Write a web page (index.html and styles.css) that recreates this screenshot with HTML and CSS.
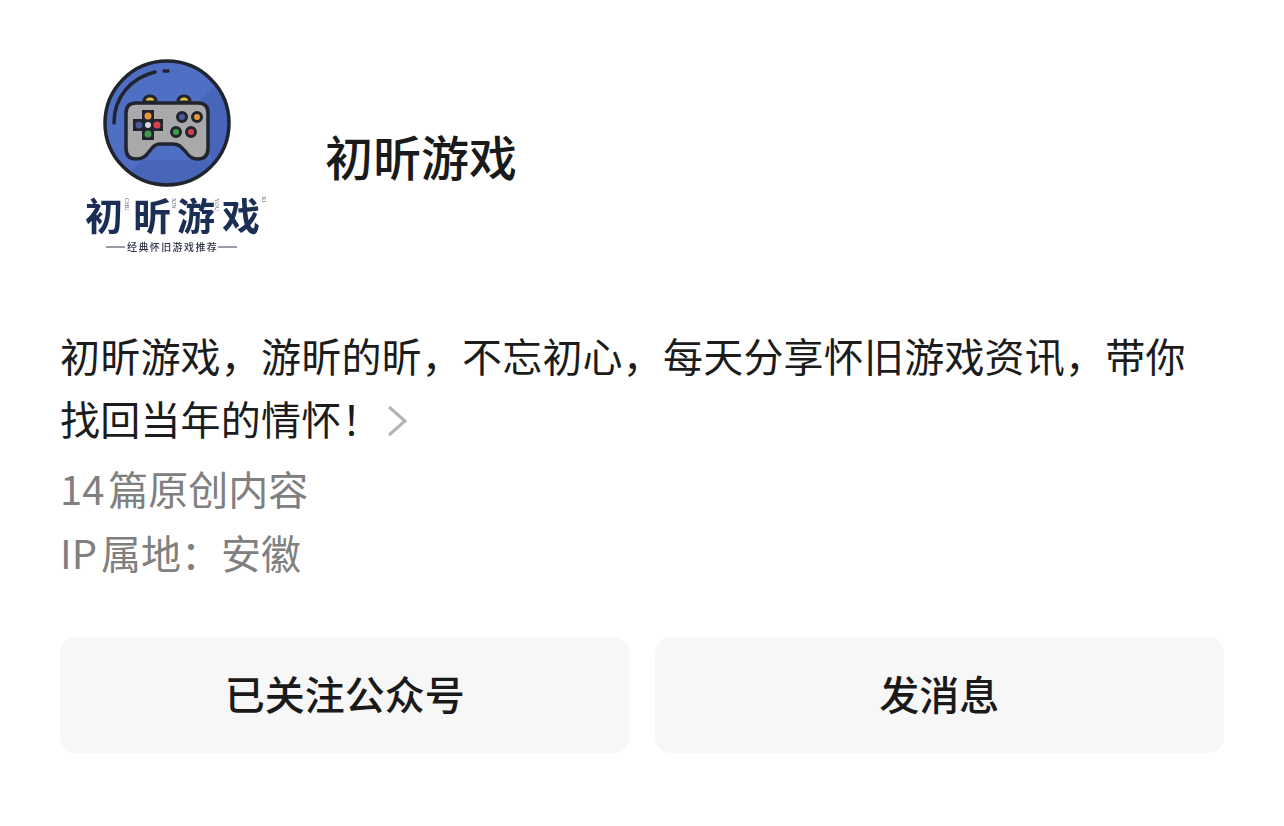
FILE: index.html
```html
<!DOCTYPE html>
<html lang="zh-CN">
<head>
<meta charset="utf-8">
<title>初昕游戏</title>
<link rel="stylesheet" href="styles.css">
</head>
<body>
<main class="card">
  <header class="head">
    <svg class="logo" viewBox="80 56 190 204" width="190" height="204" role="img" aria-label="初昕游戏">
      <defs><clipPath id="disc"><circle cx="167" cy="123" r="61"/></clipPath></defs>
      <circle cx="167" cy="123" r="62" fill="#4f6fc4"/>
      <path clip-path="url(#disc)" d="M230 70 L196 104 L212 160 L140 160 L120 190 L240 190 Z" fill="#4766b9"/>
      <circle cx="167" cy="123" r="62" fill="none" stroke="#20242e" stroke-width="3.500"/>
      <path d="M114 123 C114 98 130 78 155 72" fill="none" stroke="#20242e" stroke-width="3.500" stroke-linecap="round"/>
      <path d="M164 71 H168" fill="none" stroke="#20242e" stroke-width="3.500" stroke-linecap="round"/>
      <path d="M144 102 Q144 96 150 96 Q156 96 156 102 Z" fill="#e5c53c" stroke="#20242e" stroke-width="3"/>
      <path d="M178 102 Q178 96 184 96 Q190 96 190 102 Z" fill="#e5c53c" stroke="#20242e" stroke-width="3"/>
      <path d="M136 103 L198 103 Q208 103 208 113 L208 148 Q208 159 198 159 Q190 159 186 152 L180 146 Q177 144 172 144 L160 144 Q156 144 153 147 L148 153 Q144 159 136 159 Q126 159 126 148 L126 113 Q126 103 136 103 Z" fill="#a9a9a9" stroke="#20242e" stroke-width="3.500"/>
      <path d="M142 110 H154 V119 H163 V131 H154 V140 H142 V131 H133 V119 H142 Z" fill="#20242e"/>
      <circle cx="148" cy="116" r="3.500" fill="#e8963c"/>
      <circle cx="139" cy="125" r="3.500" fill="#4b5a9a"/>
      <circle cx="157" cy="125" r="3.500" fill="#d8404e"/>
      <circle cx="148" cy="134" r="3.500" fill="#3f9b4a"/>
      <circle cx="148" cy="125" r="3" fill="#d8d8d8"/>
      <circle cx="182" cy="117" r="4.500" fill="#4b5a9a" stroke="#20242e" stroke-width="3"/>
      <circle cx="197" cy="117" r="4.500" fill="#e8963c" stroke="#20242e" stroke-width="3"/>
      <circle cx="176" cy="132" r="4.500" fill="#3f9b4a" stroke="#20242e" stroke-width="3"/>
      <circle cx="191" cy="132" r="4.500" fill="#d8404e" stroke="#20242e" stroke-width="3"/>
      <text class="logo-name" x="85 133 177 222" y="230">初昕游戏</text>
      <text class="logo-pin" transform="translate(125 198) rotate(90)">CHU</text>
      <text class="logo-pin" transform="translate(172 198) rotate(90)">XIN</text>
      <text class="logo-pin" transform="translate(215 198) rotate(90)">YOU</text>
      <text class="logo-pin" transform="translate(262 196) rotate(90)">XI</text>
      <path d="M106 247 H125 M218 247 H237" stroke="#33384a" stroke-width="1"/>
      <text class="logo-sub" x="127" y="250.500">经典怀旧游戏推荐</text>
    </svg>
    <h1 class="name">初昕游戏</h1>
  </header>
  <p class="desc">初昕游戏，游昕的昕，不忘初心，每天分享怀旧游戏资讯，带你找回当年的情怀！<svg class="chev" viewBox="0 0 22 32" width="22" height="32" aria-hidden="true"><path d="M3 2 L19 16 L3 30" fill="none" stroke="#b4b4b4" stroke-width="3"/></svg></p>
  <p class="meta meta-first">14 篇原创内容</p>
  <p class="meta">IP 属地：安徽</p>
  <div class="actions">
    <button class="btn" type="button">已关注公众号</button>
    <button class="btn" type="button">发消息</button>
  </div>
</main>
</body>
</html>
```
FILE: styles.css
```css
* { box-sizing: border-box; }
html, body { margin: 0; padding: 0; background: #fff; }
body {
  width: 1284px;
  height: 826px;
  overflow: hidden;
  font-family: "Noto Sans CJK SC", "Noto Sans", sans-serif;
  color: #1a1a1a;
}
.card { padding: 56px 60px 0; }
.head { display: flex; align-items: flex-start; height: 268px; }
.logo { display: block; margin-left: 20px; flex: none; filter: blur(0.400px); }
.logo-name { font-size: 38px; font-weight: 700; fill: #1b2e55; }
.logo-pin { font-family: "Liberation Serif", serif; font-size: 6px; fill: #555c6c; }
.logo-sub { font-size: 10px; font-weight: 500; fill: #33384a; letter-spacing: 1.400px; }
.name {
  margin: 67px 0 0 55px;
  font-size: 48px;
  line-height: 64px;
  font-weight: 500;
  color: #1a1a1a;
}
.desc {
  margin: 0;
  width: 1164px;
  font-size: 40px;
  line-height: 63px;
  letter-spacing: 0.200px;
  color: #1c1c1c;
}
.chev { display: inline-block; margin-left: 4px; vertical-align: -2px; }
.meta {
  margin: 0;
  font-size: 40px;
  line-height: 64px;
  color: #808080;
  word-spacing: -5px;
}
.meta-first { margin-top: 6px; }
.actions { display: flex; gap: 25px; margin-top: 53px; }
.btn {
  flex: 1;
  height: 116px;
  border: 0;
  border-radius: 16px;
  background: #f7f7f7;
  font: 500 40px/1 "Noto Sans CJK SC", "Noto Sans", sans-serif;
  color: #1a1a1a;
  padding: 0 0 4px;
}
```
